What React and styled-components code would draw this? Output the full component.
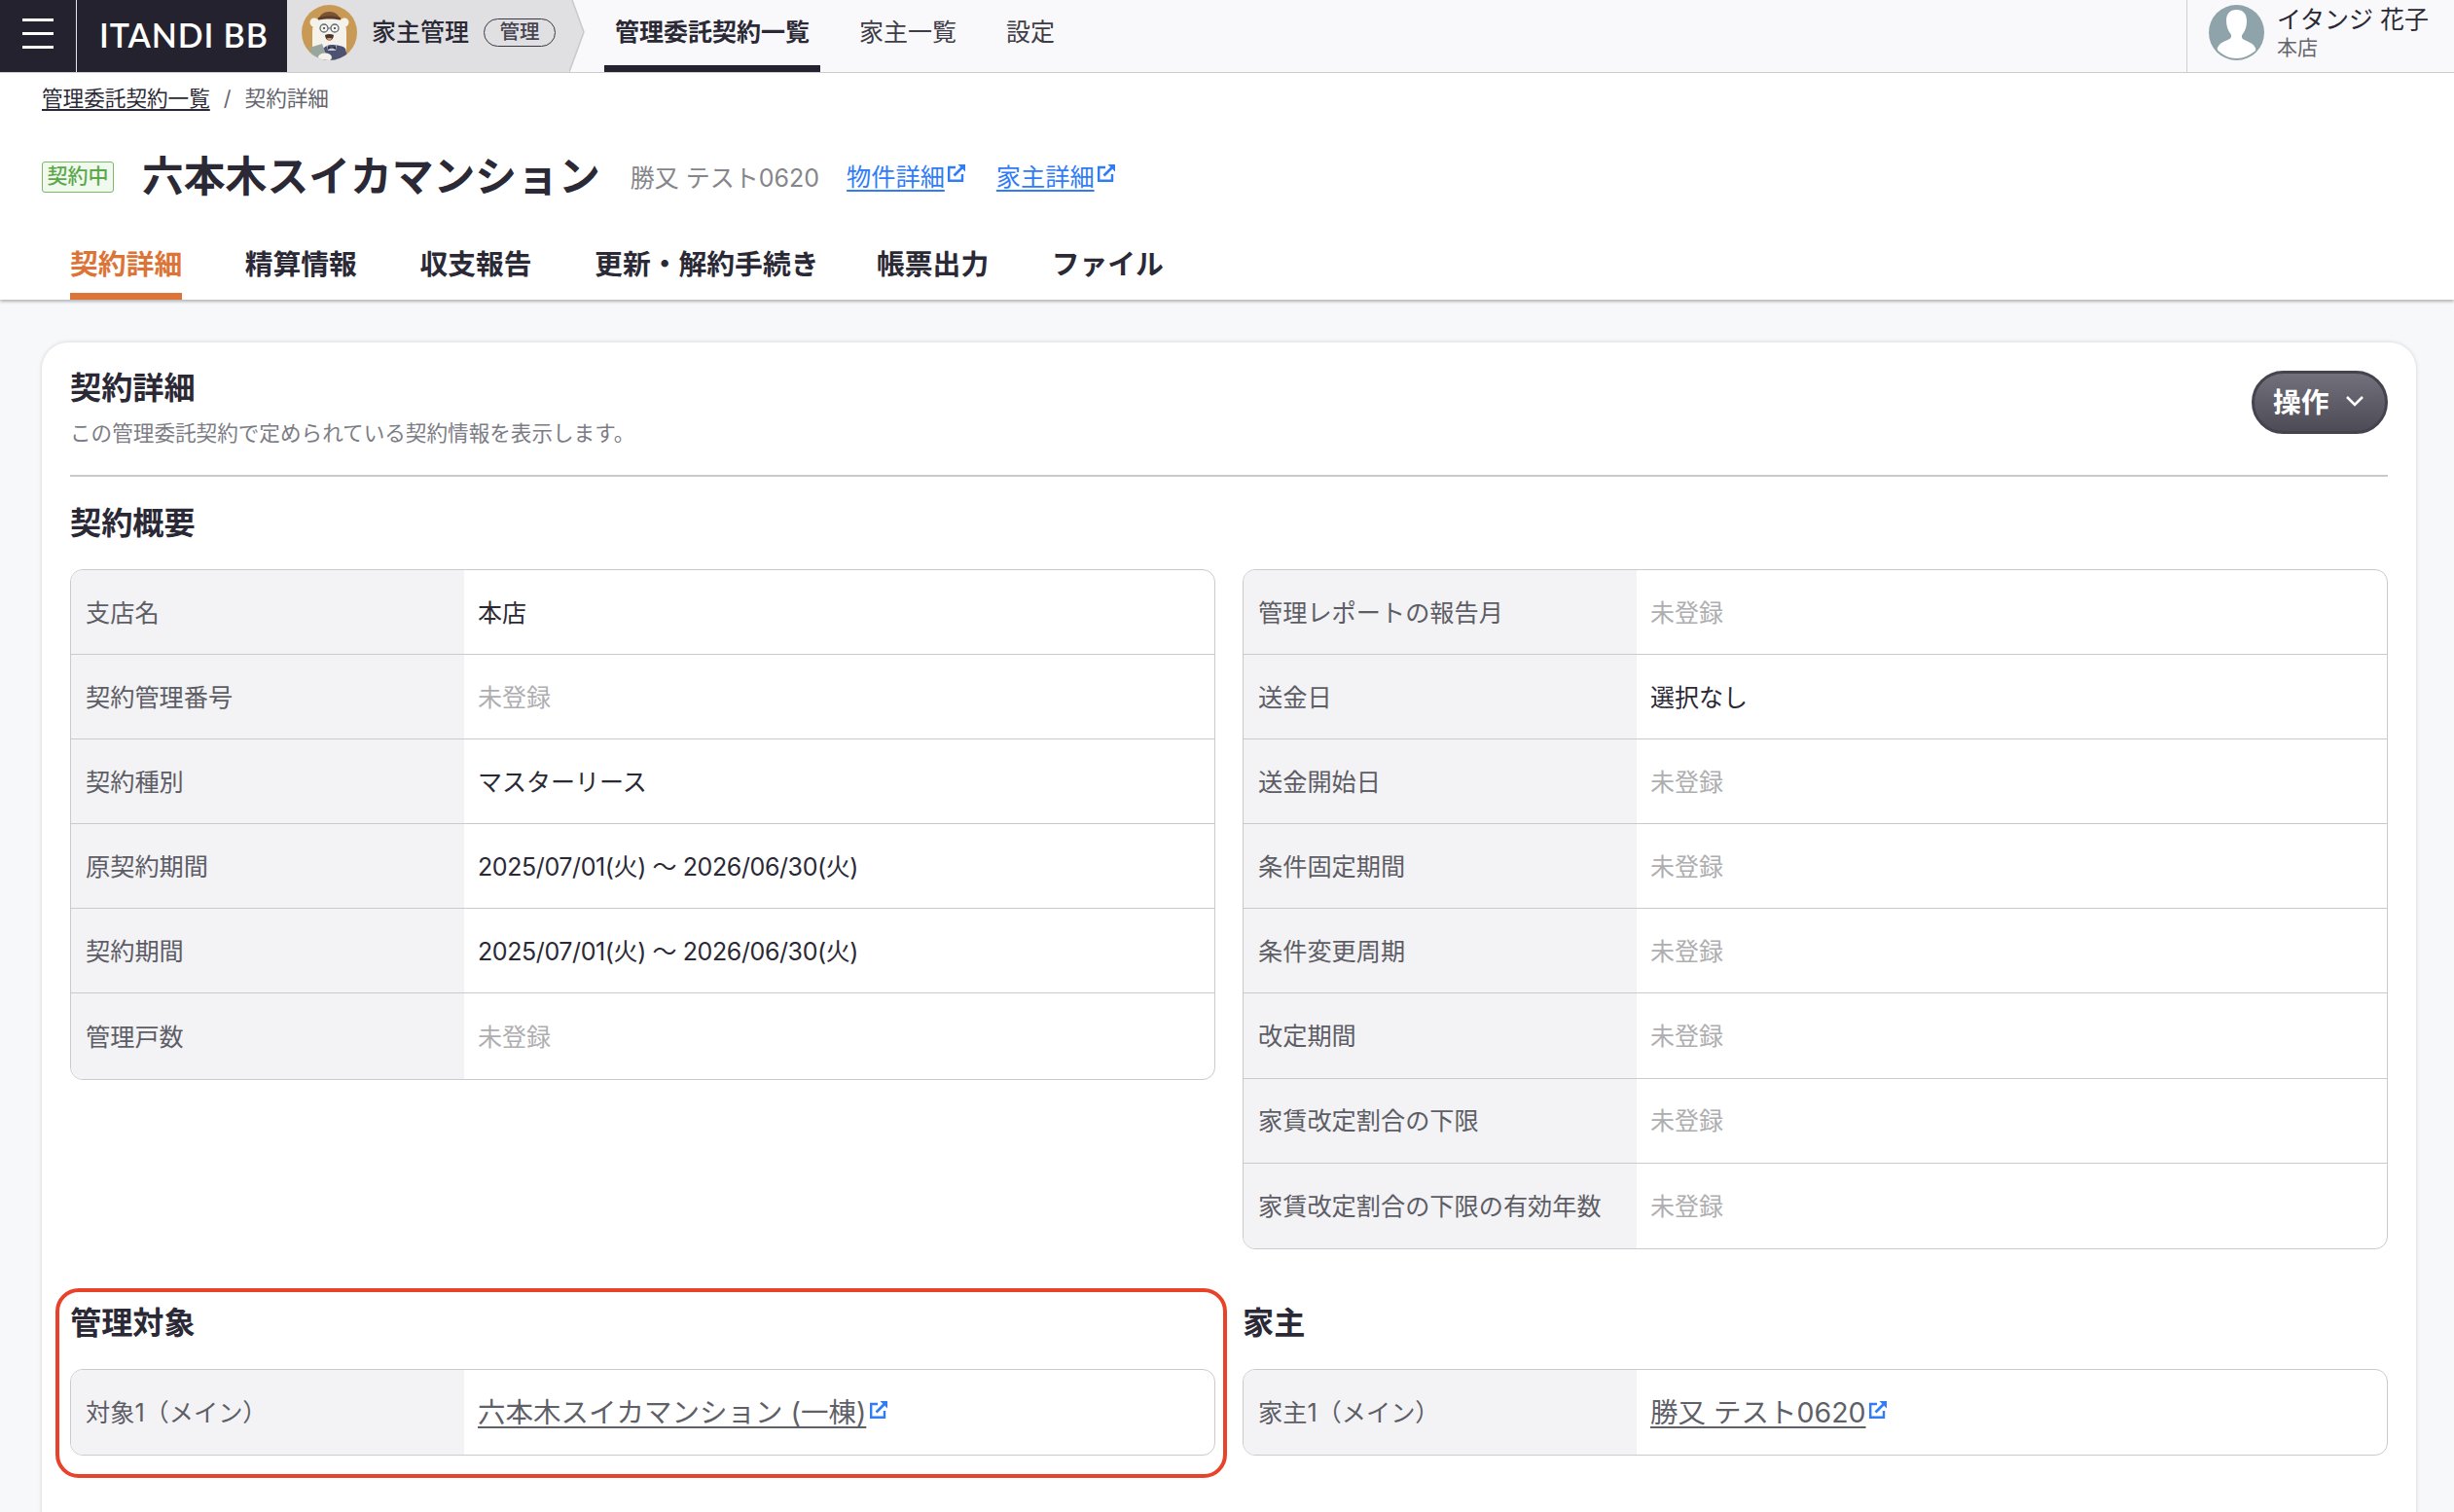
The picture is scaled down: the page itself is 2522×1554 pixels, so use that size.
import React from 'react';
import styled, { createGlobalStyle } from 'styled-components';

const GlobalStyle = createGlobalStyle`
  html, body {
    margin: 0;
    height: 100%;
    overflow: hidden;
    background: #f7f8fa;
  }
  body {
    font-family: Inter, "Noto Sans CJK JP", sans-serif;
    color: #2a2935;
  }
  #root {
    height: 100vh;
    overflow: hidden;
  }
`;

const Header = styled.header`
  display: flex;
  height: 75px;
  box-sizing: border-box;
  background: #f9f9fb;
  border-bottom: 1.5px solid #cfcfd2;
`;

const MenuButton = styled.div`
  width: 79px;
  background: #24222e;
  border-right: 1.5px solid #e6e6e8;
  box-sizing: border-box;
  display: flex;
  flex-direction: column;
  gap: 11px;
  padding: 19px 23px 0;
  span {
    display: block;
    height: 3px;
    background: #fff;
  }
`;

const Logo = styled.div`
  width: 216px;
  background: #24222e;
  color: #fff;
  font-family: Lato, sans-serif;
  font-size: 34px;
  font-weight: 600;
  letter-spacing: 0.9px;
  line-height: 71px;
  padding-left: 23px;
  box-sizing: border-box;
`;

const Product = styled.div`
  width: 290px;
  background: #e0e0e2;
  display: flex;
  align-items: flex-start;
  padding: 5px 0 0 15px;
  box-sizing: border-box;
`;

const ProductName = styled.span`
  font-size: 25px;
  font-weight: 500;
  line-height: 56px;
  margin-left: 15px;
  white-space: nowrap;
`;

const RoleBadge = styled.span`
  margin: 14px 0 0 15px;
  width: 74px;
  height: 29px;
  box-sizing: border-box;
  border: 1.5px solid #3a3847;
  border-radius: 15px;
  font-size: 20.5px;
  font-weight: 500;
  color: #45434f;
  line-height: 25px;
  text-align: center;
  white-space: nowrap;
`;

const Nav = styled.nav`
  display: flex;
  gap: 29px;
  margin-left: 20px;
`;

const NavItem = styled.a`
  padding: 0 11px;
  font-size: 25px;
  font-weight: ${(p) => (p.$active ? 700 : 400)};
  color: ${(p) => (p.$active ? '#2a2935' : '#3d3c47')};
  line-height: 66px;
  height: 74px;
  box-sizing: border-box;
  border-bottom: 7px solid ${(p) => (p.$active ? '#24222e' : 'transparent')};
  white-space: nowrap;
`;

const UserBox = styled.div`
  margin-left: auto;
  width: 275px;
  box-sizing: border-box;
  border-left: 1.5px solid #cfcfd2;
  display: flex;
  padding: 5px 0 0 22px;
`;

const UserText = styled.div`
  margin-left: 13px;
  white-space: nowrap;
`;

const UserName = styled.div`
  font-size: 25px;
  line-height: 30px;
`;

const UserShop = styled.div`
  font-size: 21px;
  line-height: 27px;
  color: #66656e;
`;

const PageTop = styled.section`
  background: #fff;
  height: 233px;
  box-sizing: border-box;
  padding: 11px 43px 0;
  box-shadow: 0 2px 3px rgba(0, 0, 0, 0.28);
  position: relative;
`;

const Breadcrumb = styled.div`
  display: flex;
  align-items: center;
  font-size: 21.6px;
  line-height: 30px;
  color: #66656e;
  a {
    color: #2a2935;
    text-decoration: underline;
    text-underline-offset: 3px;
  }
  i {
    font-style: normal;
    margin: 0 14px;
  }
`;

const TitleRow = styled.div`
  display: flex;
  align-items: center;
  margin-top: 41px;
  height: 50px;
`;

const StatusBadge = styled.span`
  width: 74px;
  height: 32px;
  box-sizing: border-box;
  background: #f1f8ee;
  border: 1.5px solid #79b968;
  border-radius: 3px;
  color: #5aa84a;
  font-size: 21px;
  font-weight: 500;
  line-height: 28px;
  text-align: center;
  white-space: nowrap;
`;

const Title = styled.h1`
  margin: 0 0 0 29px;
  font-size: 42.8px;
  font-weight: 700;
  line-height: 50px;
  white-space: nowrap;
`;

const OwnerName = styled.span`
  margin-left: 31px;
  font-size: 25px;
  color: #85858a;
  white-space: nowrap;
  position: relative;
  top: -1px;
`;

const BlueLink = styled.a`
  margin-left: 28px;
  font-size: 25.2px;
  color: #2f7cf6;
  text-decoration: underline;
  text-underline-offset: 4px;
  display: flex;
  align-items: flex-start;
  white-space: nowrap;
  position: relative;
  top: -2px;
  & + & {
    margin-left: 31px;
  }
`;

const Tabs = styled.div`
  display: flex;
  margin-top: 44px;
  padding-left: 29px;
  gap: 64.5px;
`;

const Tab = styled.a`
  font-size: 28.8px;
  font-weight: 700;
  line-height: 41px;
  height: 57px;
  box-sizing: border-box;
  white-space: nowrap;
  color: ${(p) => (p.$active ? '#dd7437' : '#2a2935')};
  border-bottom: 7px solid ${(p) => (p.$active ? '#dd7437' : 'transparent')};
  &:nth-child(4) {
    margin-right: -5px;
  }
`;

const Content = styled.main`
  padding: 44px 39px 0 43px;
`;

const Card = styled.div`
  background: #fff;
  border-radius: 27px;
  padding: 27px 29px 120px;
  box-shadow: 0 0 4px rgba(0, 0, 0, 0.16);
`;

const CardHead = styled.div`
  display: flex;
  justify-content: space-between;
  height: 109px;
  border-bottom: 2px solid #c9c9c9;
`;

const CardTitle = styled.h2`
  margin: 0;
  font-size: 32.2px;
  font-weight: 700;
  line-height: 40px;
`;

const CardNote = styled.p`
  margin: 11px 0 0;
  font-size: 21.6px;
  line-height: 30px;
  color: #7c7c84;
`;

const ActionButton = styled.button`
  width: 140px;
  height: 65px;
  margin-top: 2px;
  padding: 0 21px 4px 19px;
  border: 3px solid #45434f;
  border-radius: 33px;
  background: linear-gradient(#72707a, #4d4b55);
  color: #fff;
  font-family: inherit;
  font-size: 28.8px;
  font-weight: 700;
  display: flex;
  align-items: center;
  justify-content: space-between;
`;

const Sections = styled.div`
  display: grid;
  grid-template-columns: 1fr 1fr;
  column-gap: 28px;
  row-gap: 53px;
  margin-top: 25px;
  align-items: start;
`;

const Section = styled.section`
  position: relative;
`;

const SectionTitle = styled.h3`
  margin: 0 0 24px;
  font-size: 32.2px;
  font-weight: 700;
  line-height: 46px;
`;

const Highlight = styled.div`
  position: absolute;
  top: -13px;
  left: -15px;
  right: -12px;
  bottom: -23px;
  border: 4px solid #e8432a;
  border-radius: 24px;
  pointer-events: none;
`;

const Table = styled.div`
  border: 1.5px solid #cacacd;
  border-radius: 13px;
  overflow: hidden;
`;

const Row = styled.div`
  display: grid;
  grid-template-columns: 404px 1fr;
  height: 87.1px;
  box-sizing: border-box;
  border-bottom: 1.5px solid #cacacd;
  &:last-child {
    border-bottom: 0;
  }
`;

const Label = styled.div`
  background: #f3f3f5;
  color: #5d5d66;
  font-size: 25.2px;
  padding: 0 0 3px 15px;
  display: flex;
  align-items: center;
  white-space: nowrap;
`;

const Value = styled.div`
  padding: 0 0 3px 14px;
  font-size: 25px;
  letter-spacing: ${(p) => (p.$tight ? '-0.4px' : '0')};
  color: ${(p) => (p.$empty ? '#aeaeb0' : '#2a2935')};
  display: flex;
  align-items: center;
  white-space: nowrap;
`;

const GrayLink = styled.a`
  font-size: 28.5px;
  color: #5f5f68;
  text-decoration: underline;
  text-underline-offset: 4px;
  display: flex;
  align-items: flex-start;
`;

const ExternalSvg = styled.svg`
  margin: ${(p) => p.$top}px 0 0 ${(p) => p.$left}px;
  flex-shrink: 0;
`;

const ExternalIcon = ({ top = 6, left = 2 }) => (
  <ExternalSvg $top={top} $left={left} width="20" height="20" viewBox="0 0 20 20" fill="none">
    <path d="M9 4H2.2v13.8H16V11" stroke="#2f7cf6" strokeWidth="2.4" />
    <path d="M7.5 12.5 15.5 4.5" stroke="#2f7cf6" strokeWidth="2.6" />
    <path d="M11.5 1H19v7.5z" fill="#2f7cf6" />
  </ExternalSvg>
);

const Chevron = () => (
  <svg width="20" height="12" viewBox="0 0 20 12" fill="none">
    <path d="M2 2l8 8 8-8" stroke="#fff" strokeWidth="2.6" />
  </svg>
);

// 家主管理のくま
const BearAvatar = () => (
  <svg width="57" height="57" viewBox="0 0 57 57" style={{ flexShrink: 0 }}>
    <defs>
      <clipPath id="bearClip">
        <circle cx="28.5" cy="28.5" r="28.5" />
      </clipPath>
    </defs>
    <g clipPath="url(#bearClip)">
      <rect width="57" height="57" fill="#c99a55" />
      <circle cx="13" cy="18" r="4.5" fill="#f4f2ea" />
      <circle cx="44" cy="18" r="4.5" fill="#f4f2ea" />
      <path d="M11 57V27c0-10 7-15 17.500-15S46 17 46 27v30z" fill="#f4f2ea" />
      <path d="M18 14c1-4 5-7 10.500-7S38 10 39 14c-6-1.500-15-1.500-21 0z" fill="#7a5236" />
      <path d="M17 13c7-2 16-2 23 0v2.500c-7-1.500-16-1.500-23 0z" fill="#5b3d2a" />
      <circle cx="23" cy="24" r="4" fill="none" stroke="#5d6a7c" strokeWidth="1.300" />
      <circle cx="34" cy="24" r="4" fill="none" stroke="#5d6a7c" strokeWidth="1.300" />
      <path d="M27 24h3" stroke="#5d6a7c" strokeWidth="1.200" />
      <circle cx="23" cy="24" r="1" fill="#333" />
      <circle cx="34" cy="24" r="1" fill="#333" />
      <path d="M24 31c3-1.500 6-1.500 9 0-.5 4-2.200 5.500-4.500 5.500S24.500 35 24 31z" fill="#4b3428" />
      <path d="M26 34h5l-1 2.300h-3z" fill="#d98a7a" />
      <path d="M22 57V45c3-3 6-4 8-4 6 0 13 1 15 4l3 12z" fill="#4c5270" />
      <path d="M26 41l5 4 5-4-1 6h-8z" fill="#c9c6d8" />
      <path d="M31 44l-4-2v4zM31 44l4-2v4z" fill="#2d3048" />
      <path d="M8 44l13-4 5 13-13 5z" fill="#98a69e" />
      <ellipse cx="24" cy="54" rx="7" ry="4.500" fill="#f4f2ea" />
    </g>
  </svg>
);

const UserAvatar = () => (
  <svg width="57" height="57" viewBox="0 0 57 57" style={{ flexShrink: 0 }}>
    <circle cx="28.500" cy="28.500" r="28.500" fill="#8fa3ab" />
    <path d="M28.500 5c-7 0-10.500 4.500-10.500 11 0 5.500 1.500 10.500 4.500 14 .8 1 .8 3.500-.5 4.500-2.500 2-10 3.500-12.500 8.500-1 1.500-1 2.500 0 4C15 52 21.500 55 28.500 55s13.500-3 19-7.500c1-1.500 1-2.500 0-4-2.500-5-10-6.500-12.500-8.500-1.300-1-1.300-3.500-.5-4.500 3-3.500 4.500-8.500 4.500-14C39 9.500 35.500 5 28.500 5z" fill="#fff" />
  </svg>
);

const overviewLeft = [
  ['支店名', '本店'],
  ['契約管理番号', null],
  ['契約種別', 'マスターリース'],
  ['原契約期間', '2025/07/01(火) 〜 2026/06/30(火)'],
  ['契約期間', '2025/07/01(火) 〜 2026/06/30(火)'],
  ['管理戸数', null],
];

const overviewRight = [
  ['管理レポートの報告月', null],
  ['送金日', '選択なし'],
  ['送金開始日', null],
  ['条件固定期間', null],
  ['条件変更周期', null],
  ['改定期間', null],
  ['家賃改定割合の下限', null],
  ['家賃改定割合の下限の有効年数', null],
];

const InfoTable = ({ rows }) => (
  <Table>
    {rows.map(([label, value]) => (
      <Row key={label}>
        <Label>{label}</Label>
        <Value $empty={!value} $tight={/\d/.test(value || '')}>{value || '未登録'}</Value>
      </Row>
    ))}
  </Table>
);

const App = () => (
  <>
    <GlobalStyle />
    <Header>
      <MenuButton>
        <span />
        <span />
        <span />
      </MenuButton>
      <Logo>ITANDI BB</Logo>
      <Product>
        <BearAvatar />
        <ProductName>家主管理</ProductName>
        <RoleBadge>管理</RoleBadge>
      </Product>
      <svg width="16" height="74" viewBox="0 0 16 74" style={{ flexShrink: 0 }}>
        <path d="M0 0h3l12 33L0 74z" fill="#e0e0e2" />
        <path d="M3 0l12 33L0 74" fill="none" stroke="#c9c9cc" strokeWidth="1.500" />
      </svg>
      <Nav>
        <NavItem $active>管理委託契約一覧</NavItem>
        <NavItem>家主一覧</NavItem>
        <NavItem>設定</NavItem>
      </Nav>
      <UserBox>
        <UserAvatar />
        <UserText>
          <UserName>イタンジ 花子</UserName>
          <UserShop>本店</UserShop>
        </UserText>
      </UserBox>
    </Header>

    <PageTop>
      <Breadcrumb>
        <a>管理委託契約一覧</a>
        <i>/</i>
        <span>契約詳細</span>
      </Breadcrumb>
      <TitleRow>
        <StatusBadge>契約中</StatusBadge>
        <Title>六本木スイカマンション</Title>
        <OwnerName>勝又 テスト0620</OwnerName>
        <BlueLink>物件詳細<ExternalIcon /></BlueLink>
        <BlueLink>家主詳細<ExternalIcon /></BlueLink>
      </TitleRow>
      <Tabs>
        <Tab $active>契約詳細</Tab>
        <Tab>精算情報</Tab>
        <Tab>収支報告</Tab>
        <Tab>更新・解約手続き</Tab>
        <Tab>帳票出力</Tab>
        <Tab>ファイル</Tab>
      </Tabs>
    </PageTop>

    <Content>
      <Card>
        <CardHead>
          <div>
            <CardTitle>契約詳細</CardTitle>
            <CardNote>この管理委託契約で定められている契約情報を表示します。</CardNote>
          </div>
          <ActionButton>
            操作
            <Chevron />
          </ActionButton>
        </CardHead>
        <Sections>
          <Section>
            <SectionTitle>契約概要</SectionTitle>
            <InfoTable rows={overviewLeft} />
          </Section>
          <Section>
            <SectionTitle as="div" aria-hidden style={{ visibility: 'hidden' }}>　</SectionTitle>
            <InfoTable rows={overviewRight} />
          </Section>
          <Section>
            <SectionTitle>管理対象</SectionTitle>
            <Table>
              <Row>
                <Label>対象1（メイン）</Label>
                <Value>
                  <GrayLink>六本木スイカマンション (一棟)<ExternalIcon top={10} left={3} /></GrayLink>
                </Value>
              </Row>
            </Table>
            <Highlight />
          </Section>
          <Section>
            <SectionTitle>家主</SectionTitle>
            <Table>
              <Row>
                <Label>家主1（メイン）</Label>
                <Value>
                  <GrayLink>勝又 テスト0620<ExternalIcon top={10} /></GrayLink>
                </Value>
              </Row>
            </Table>
          </Section>
        </Sections>
      </Card>
    </Content>
  </>
);

export default App;
